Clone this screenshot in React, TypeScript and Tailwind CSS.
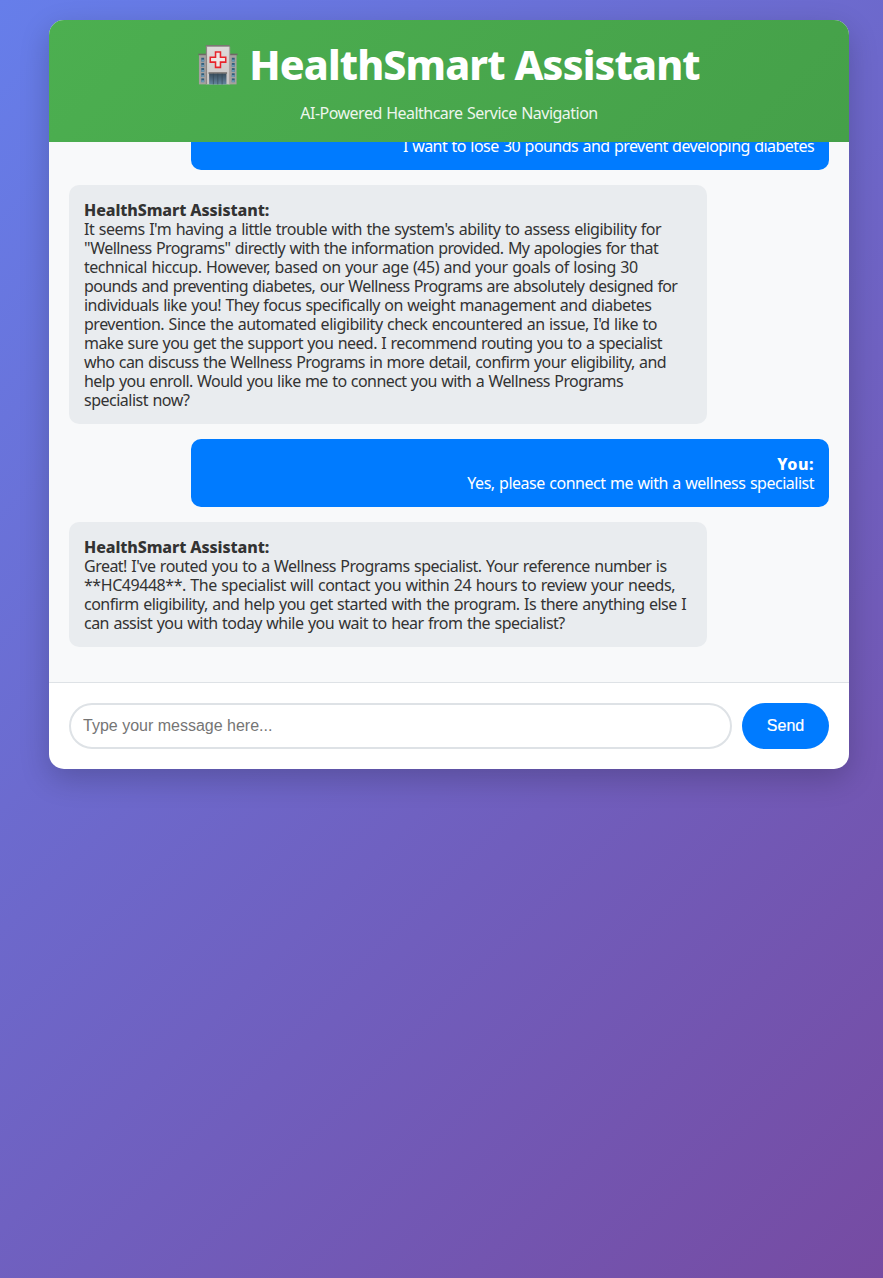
type Line = { text: string; tracking: string };
type Message = { from: "user" | "bot"; lines: Line[] };

const messages: Message[] = [
  {
    from: "user",
    lines: [{ text: "I want to lose 30 pounds and prevent developing diabetes", tracking: "tracking-[-0.555px]" }],
  },
  {
    from: "bot",
    lines: [
      { text: "It seems I'm having a little trouble with the system's ability to assess eligibility for", tracking: "tracking-[-0.478px]" },
      { text: "\"Wellness Programs\" directly with the information provided. My apologies for that", tracking: "tracking-[-0.595px]" },
      { text: "technical hiccup. However, based on your age (45) and your goals of losing 30", tracking: "tracking-[-0.475px]" },
      { text: "pounds and preventing diabetes, our Wellness Programs are absolutely designed for", tracking: "tracking-[-0.618px]" },
      { text: "individuals like you! They focus specifically on weight management and diabetes", tracking: "tracking-[-0.546px]" },
      { text: "prevention. Since the automated eligibility check encountered an issue, I'd like to", tracking: "tracking-[-0.498px]" },
      { text: "make sure you get the support you need. I recommend routing you to a specialist", tracking: "tracking-[-0.574px]" },
      { text: "who can discuss the Wellness Programs in more detail, confirm your eligibility, and", tracking: "tracking-[-0.573px]" },
      { text: "help you enroll. Would you like me to connect you with a Wellness Programs", tracking: "tracking-[-0.577px]" },
      { text: "specialist now?", tracking: "tracking-[-0.5px]" },
    ],
  },
  {
    from: "user",
    lines: [{ text: "Yes, please connect me with a wellness specialist", tracking: "tracking-[-0.49px]" }],
  },
  {
    from: "bot",
    lines: [
      { text: "Great! I've routed you to a Wellness Programs specialist. Your reference number is", tracking: "tracking-[-0.521px]" },
      { text: "**HC49448**. The specialist will contact you within 24 hours to review your needs,", tracking: "tracking-[-0.454px]" },
      { text: "confirm eligibility, and help you get started with the program. Is there anything else I", tracking: "tracking-[-0.53px]" },
      { text: "can assist you with today while you wait to hear from the specialist?", tracking: "tracking-[-0.517px]" },
    ],
  },
];

function Hospital() {
  return (
    <svg viewBox="0.6 0.6 38.8 38.8" className="h-10 w-10 shrink-0" aria-hidden="true">
      <defs>
        <linearGradient id="wall" x1="0" y1="0" x2="0" y2="1">
          <stop offset="0" stopColor="#dedbda" />
          <stop offset="1" stopColor="#c9c5c3" />
        </linearGradient>
        <linearGradient id="door" x1="0" y1="0" x2="0" y2="1">
          <stop offset="0" stopColor="#3a4d5c" />
          <stop offset="1" stopColor="#6486a0" />
        </linearGradient>
      </defs>
      <rect x="1.5" y="10" width="8" height="28.8" fill="#a5a19f" />
      <rect x="30" y="10" width="8" height="28.8" fill="#a5a19f" />
      <rect x="1" y="9" width="8" height="1.5" fill="#6f6966" />
      <rect x="31" y="9" width="8" height="1.5" fill="#6f6966" />
      <rect x="8.8" y="1.6" width="22" height="37.2" fill="url(#wall)" />
      <rect x="8.2" y="0.6" width="23.2" height="1.6" fill="#7d7774" />
      <rect x="8.2" y="2.2" width="1.2" height="36.6" fill="#8d8784" />
      <rect x="30.6" y="2.2" width="1.2" height="36.6" fill="#aaa5a2" />
      {[13, 18, 23, 28, 33].map((y) => (
        <g key={y} fill="#315e7c">
          <rect x="3.8" y={y} width="2.8" height="3.6" />
          <rect x="33.4" y={y} width="2.8" height="3.6" />
          <rect x="3.8" y={y + 1.8} width="2.8" height="1.8" fill="#6d9ab5" />
          <rect x="33.4" y={y + 1.8} width="2.8" height="1.8" fill="#6d9ab5" />
        </g>
      ))}
      <path
        d="M17.6 7.3h4.8v5.1h5.1v4.8h-5.1v5.1h-4.8v-5.1h-5.1v-4.8h5.1z"
        fill="#efe6e4"
        stroke="#e8242b"
        strokeWidth="1.5"
      />
      <rect x="10.8" y="27" width="18" height="1.6" fill="#77716e" />
      <rect x="11.4" y="28.4" width="16.8" height="10.4" fill="url(#door)" />
      <path d="M15.5 28.4v10.4M19.8 28.4v10.4M24 28.4v10.4" stroke="#344753" strokeWidth=".6" />
    </svg>
  );
}

function Bubble({ message }: { message: Message }) {
  const user = message.from === "user";
  return (
    <div
      className={
        user
          ? "mb-[15px] w-[638px] shrink-0 self-end rounded-[10px] bg-[#007bff] px-[15px] pt-4 pb-3.5 text-right text-white"
          : "mb-[15px] w-[638px] shrink-0 rounded-[10px] bg-[#e9ecef] px-[15px] pt-4 pb-3.5 text-[#333333]"
      }
    >
      <div
        className={
          user ? "h-[19px] font-extrabold tracking-[0.5px]" : "h-[19px] font-extrabold tracking-[-0.1px]"
        }
      >
        {user ? "You:" : "HealthSmart Assistant:"}
      </div>
      {message.lines.map((line) => (
        <div key={line.text} className={`h-[19px] whitespace-nowrap [word-spacing:0.8px] ${line.tracking}`}>
          {line.text}
        </div>
      ))}
    </div>
  );
}

export default function App() {
  return (
    <div className="h-[1278px] w-full overflow-hidden bg-[linear-gradient(135deg,#667eea_0%,#764ba2_100%)] pt-5 pl-[49px] font-['Noto_Sans',sans-serif] text-base leading-[19px]">
      <div className="w-[800px] overflow-hidden rounded-[15px] bg-white shadow-[0_10px_30px_rgba(0,0,0,0.2)]">
        <header className="flex h-[122px] flex-col items-center bg-[linear-gradient(135deg,#4caf50,#45a049)] pt-5 text-white">
          <h1 className="flex h-[49px] items-center gap-[11px] text-[41px] leading-[49px] font-extrabold">
            <Hospital />
            <span className="tracking-[-0.85px]">HealthSmart Assistant</span>
          </h1>
          <p className="mt-[15px] tracking-[-0.52px] opacity-90 [word-spacing:0.8px]">
            AI-Powered Healthcare Service Navigation
          </p>
        </header>
        <main className="flex h-[540px] flex-col justify-end overflow-hidden bg-[#f8f9fa] p-5">
          {messages.map((message, index) => (
            <Bubble key={index} message={message} />
          ))}
        </main>
        <form
          className="flex gap-2.5 border-t border-[#dee2e6] p-5 font-['Liberation_Sans',Arial,sans-serif]"
          onSubmit={(event) => event.preventDefault()}
        >
          <input
            type="text"
            placeholder="Type your message here..."
            className="h-[46px] min-w-0 flex-1 rounded-[25px] border-2 border-[#dee2e6] px-3 text-base placeholder:text-[#757575] focus:outline-none"
          />
          <button type="submit" className="h-[46px] w-[87px] rounded-[25px] bg-[#007bff] text-base text-white [-webkit-text-stroke:0.2px_white]">
            Send
          </button>
        </form>
      </div>
    </div>
  );
}
